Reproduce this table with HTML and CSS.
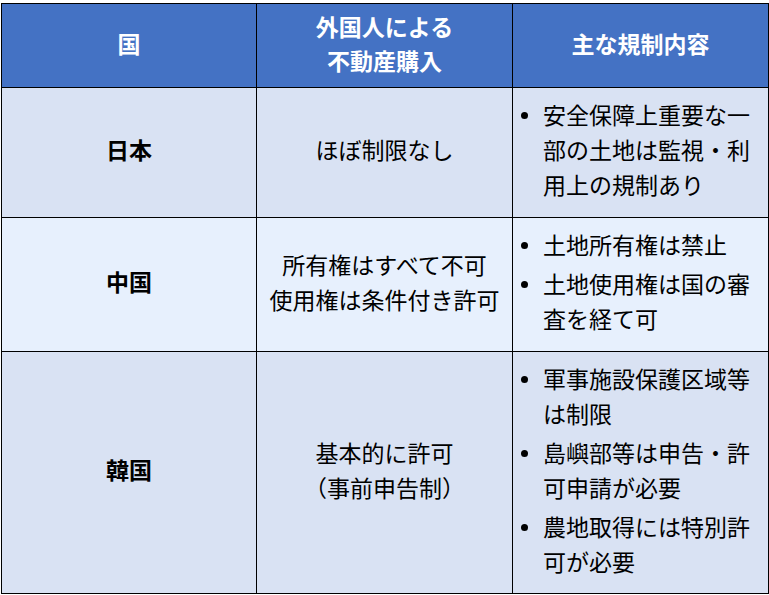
FILE: index.html
```html
<!DOCTYPE html>
<html lang="ja">
<head>
<meta charset="utf-8">
<link rel="stylesheet" href="styles.css">
</head>
<body>
<table class="cmp">
  <colgroup>
    <col class="c1"><col class="c2"><col class="c3">
  </colgroup>
  <thead>
    <tr class="head">
      <th>国</th>
      <th>外国人による<br>不動産購入</th>
      <th>主な規制内容</th>
    </tr>
  </thead>
  <tbody>
    <tr class="r1">
      <td class="country">日本</td>
      <td class="mid">ほぼ制限なし</td>
      <td class="list-cell">
        <ul class="rules">
          <li>安全保障上重要な一部の土地は監視・利用上の規制あり</li>
        </ul>
      </td>
    </tr>
    <tr class="r2">
      <td class="country">中国</td>
      <td class="mid">所有権はすべて不可<br>使用権は条件付き許可</td>
      <td class="list-cell">
        <ul class="rules">
          <li>土地所有権は禁止</li>
          <li>土地使用権は国の審査を経て可</li>
        </ul>
      </td>
    </tr>
    <tr class="r3">
      <td class="country">韓国</td>
      <td class="mid">基本的に許可<br>（事前申告制）</td>
      <td class="list-cell">
        <ul class="rules">
          <li>軍事施設保護区域等は制限</li>
          <li>島嶼部等は申告・許可申請が必要</li>
          <li>農地取得には特別許可が必要</li>
        </ul>
      </td>
    </tr>
  </tbody>
</table>
</body>
</html>
```

FILE: styles.css
```css
html, body {
  margin: 0;
  padding: 0;
  background: #ffffff;
}
body {
  padding: 3px 0 0 1px;
  font-family: "Noto Sans CJK JP", "Noto Sans", sans-serif;
  color: #000;
}
.cmp {
  border-collapse: collapse;
  table-layout: fixed;
  width: 767px;
  font-size: 23px;
  line-height: 35px;
}
.c1 { width: 255px; }
.c2 { width: 256px; }
.c3 { width: 256px; }
.cmp th, .cmp td {
  border: 1px solid #000;
  padding: 0 0 6px;
}
.head {
  height: 84px;
  background: #4472c4;
  color: #fff;
}
.head th {
  font-weight: 700;
  text-align: center;
  vertical-align: middle;
  line-height: 34px;
}
.r1 { height: 130px; background: #d9e2f3; }
.r2 { height: 134px; background: #e7f0fd; }
.r3 { height: 242px; background: #d9e2f3; }
.country {
  text-align: center;
  vertical-align: middle;
  font-weight: 700;
}
.cmp td.mid {
  text-align: center;
  vertical-align: middle;
  padding: 0 6px 6px;
}
.cmp td.list-cell {
  vertical-align: middle;
  padding: 0 8px 6px 0;
}
.rules {
  list-style: none;
  margin: 0;
  padding: 0;
  display: flex;
  flex-direction: column;
  gap: 4px;
}
.rules li {
  position: relative;
  padding-left: 30px;
}
.rules li::before {
  content: "";
  position: absolute;
  left: 8px;
  top: 15px;
  width: 7px;
  height: 7px;
  border-radius: 50%;
  background: #000;
}
```
